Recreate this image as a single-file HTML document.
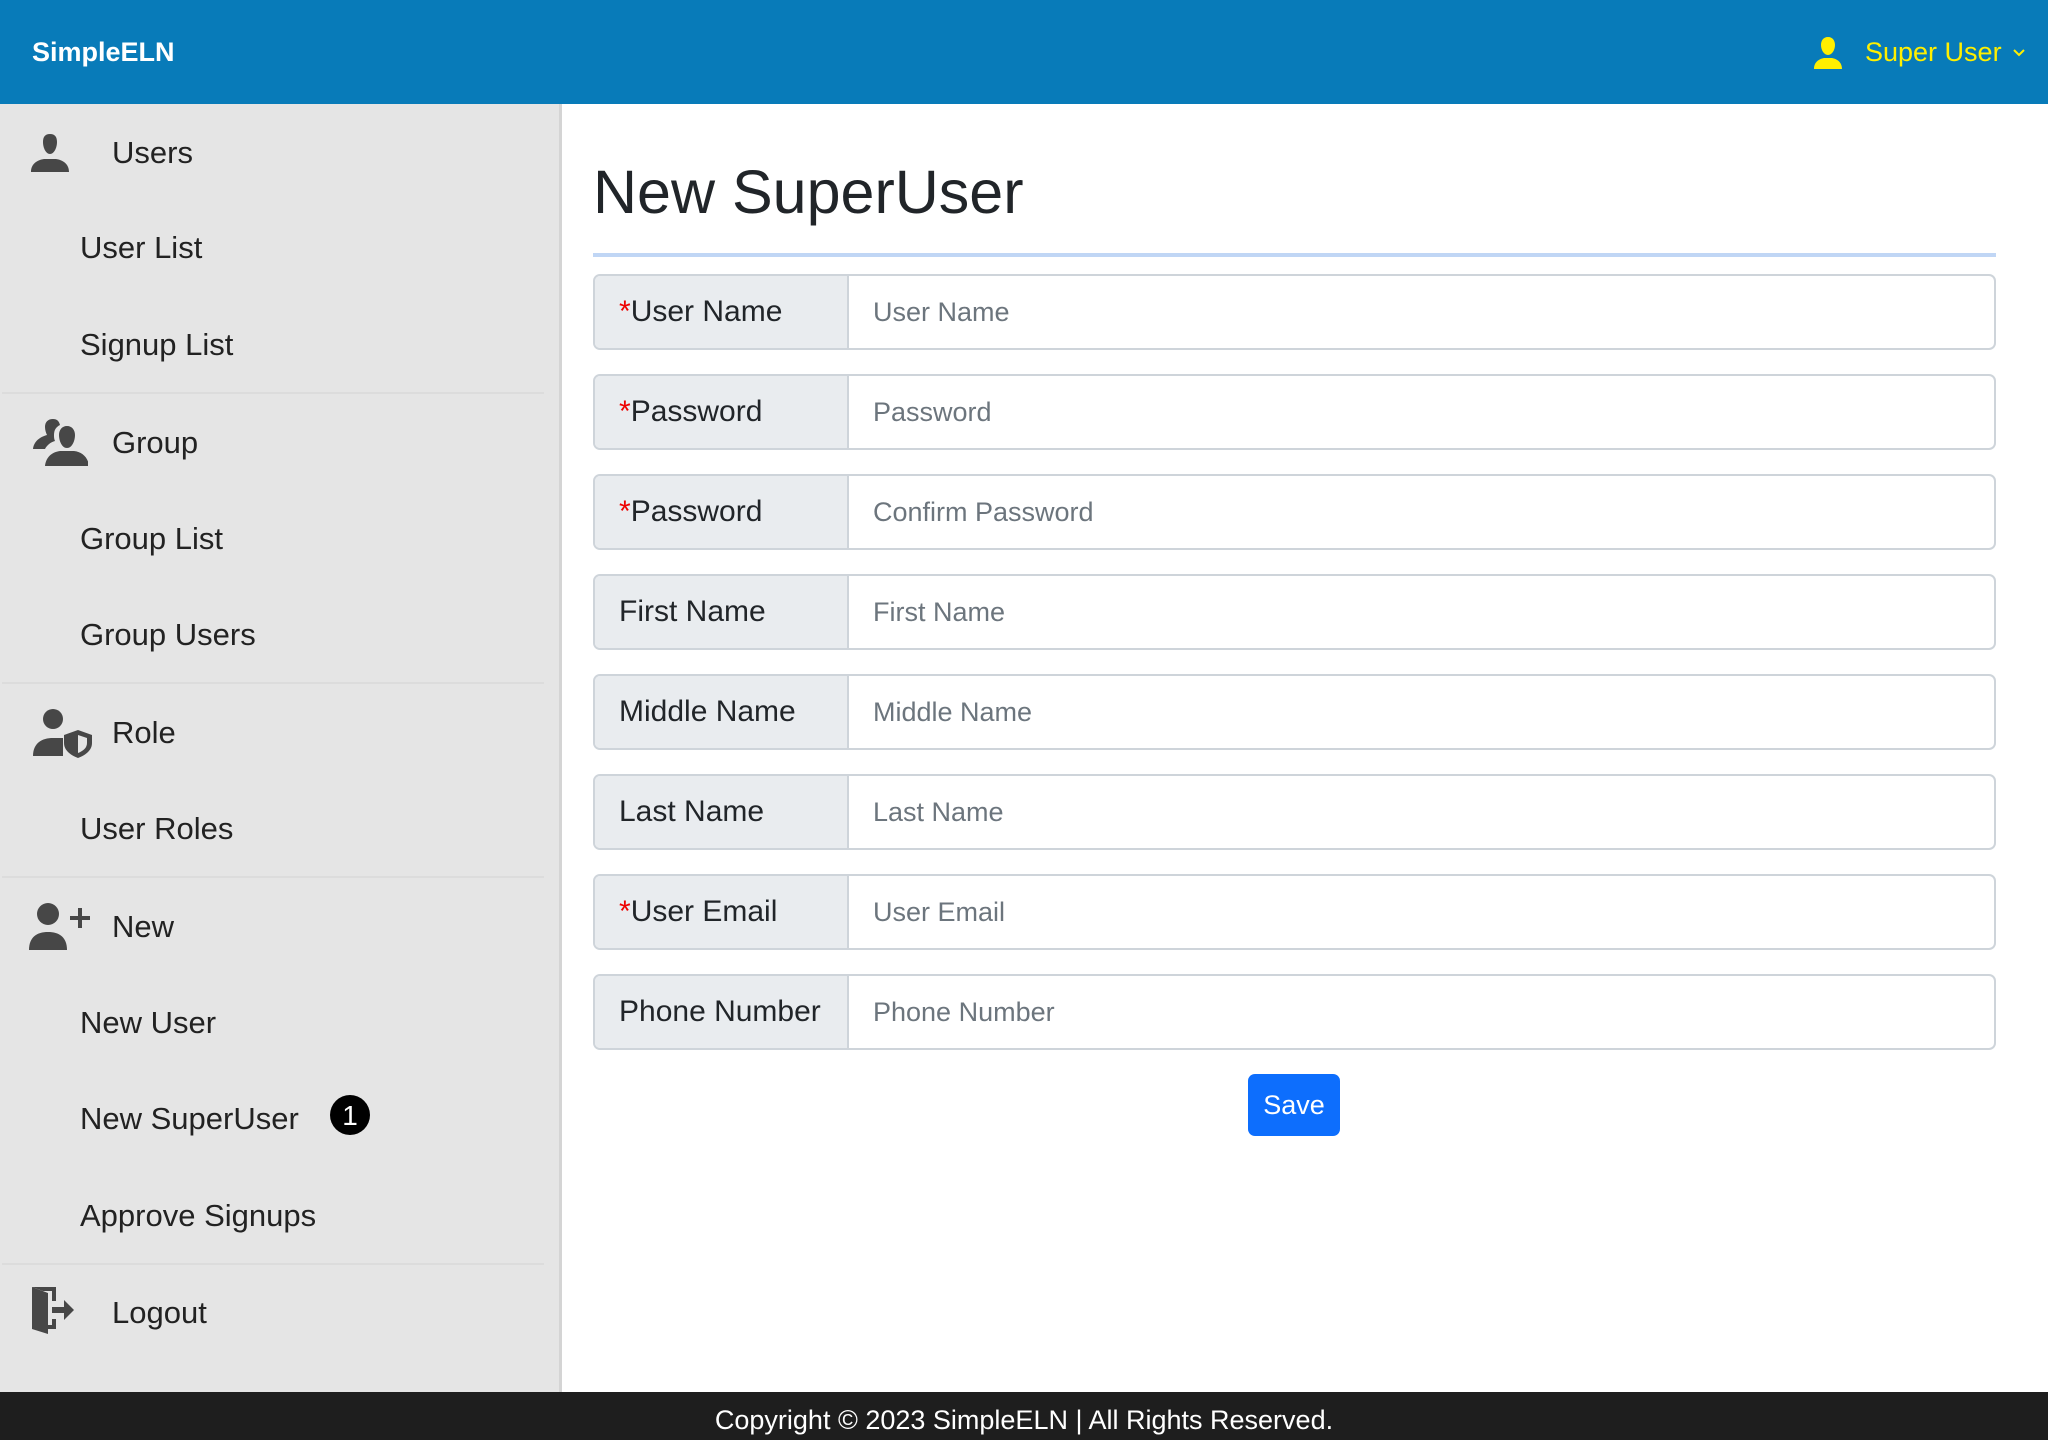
<!DOCTYPE html>
<html><head><meta charset="utf-8"><style>
*{box-sizing:border-box;margin:0;padding:0}
body{width:2048px;height:1440px;position:relative;overflow:hidden;background:#fff;font-family:"Liberation Sans",sans-serif;color:#212529}
.hdr{position:absolute;left:0;top:0;width:2048px;height:104px;background:#087bb9}
.brand{position:absolute;left:32px;top:0;line-height:104px;color:#fff;font-weight:bold;font-size:27px}
.su{position:absolute;left:1865px;top:0;line-height:104px;color:#ffef00;font-size:27px}
.side{position:absolute;left:0;top:104px;width:562px;height:1288px;background:#e5e5e5;border-right:3px solid #d4d4d4}
.it{position:absolute;font-size:31px;line-height:40px;color:#222}
.sep{position:absolute;left:2px;width:542px;height:2px;background:#dcdcdc}
.ic{position:absolute}
h1{position:absolute;left:593px;top:152px;font-size:61px;font-weight:normal;line-height:80px;color:#212529}
.line{position:absolute;left:593px;top:253px;width:1403px;height:4px;background:#c0d6f5}
.row{position:absolute;left:593px;width:1403px;height:76px;border:2px solid #ced4da;border-radius:7px;overflow:hidden;background:#fff}
.lab{position:absolute;left:0;top:0;width:254px;height:100%;background:#e9ecef;border-right:2px solid #ced4da;padding-left:24px;line-height:72px;font-size:30px;color:#212529;white-space:nowrap}
.lab b{color:#e00;font-weight:normal}
.ph{position:absolute;left:278px;top:0;line-height:72px;font-size:27px;color:#6c757d}
.btn{position:absolute;left:1248px;top:1074px;width:92px;height:62px;background:#0d6efd;border-radius:7px;color:#fff;font-size:27px;line-height:62px;text-align:center}
.ft{position:absolute;left:0;top:1392px;width:2048px;height:48px;background:#1e1e1e;color:#fff;text-align:center;font-size:27px;line-height:56px}
</style></head><body>
<div class="hdr"><div class="brand">SimpleELN</div>
<svg class="ic" style="left:1810px;top:36px" width="36" height="34" viewBox="0 0 36 34"><path d="M18 1c-5 0-7 4-7 8 0 5 3 10 7 10s7-5 7-10c0-4-2-8-7-8zM4 33c0-7 5-10 10-11h8c5 1 10 4 10 11z" fill="#ffef00"/></svg>
<div class="su">Super User</div>
<svg class="ic" style="left:2012px;top:48px" width="14" height="10" viewBox="0 0 14 10"><path d="M2 2l5 5 5-5" stroke="#ffef00" stroke-width="2" fill="none"/></svg>
</div>
<div class="side">
<svg class="ic" style="left:30px;top:29px" width="40" height="40" viewBox="0 0 40 40"><path d="M20 1c-5 0-7 3-7 8 0 6 3 12 7 12s7-6 7-12c0-5-2-8-7-8zM1 39c0-8 6-12 13-13h12c7 1 13 5 13 13z" fill="#474747"/></svg>
<div class="it" style="left:112px;top:29px">Users</div>
<div class="it" style="left:80px;top:124px">User List</div>
<div class="it" style="left:80px;top:221px">Signup List</div>
<div class="sep" style="top:288px"></div>
<svg class="ic" style="left:32px;top:314px" width="56" height="50" viewBox="0 0 56 50"><path d="M21 1c-5 0-8 3-8 8 0 3 1 6 2 8-7 2-13 6-14 14h12c2-4 6-7 10-8-1-2-1-4-1-6 0-5 2-8 6-10-1-4-3-6-7-6z" fill="#474747"/><path d="M35 8c-5 0-8 4-8 9 0 6 3 13 8 13s8-7 8-13c0-5-3-9-8-9zM13 48c1-9 7-14 15-15h14c8 1 14 6 15 15z" fill="#474747"/></svg>
<div class="it" style="left:112px;top:319px">Group</div>
<div class="it" style="left:80px;top:415px">Group List</div>
<div class="it" style="left:80px;top:511px">Group Users</div>
<div class="sep" style="top:578px"></div>
<svg class="ic" style="left:32px;top:604px" width="62" height="50" viewBox="0 0 62 50"><circle cx="21" cy="11" r="10" fill="#474747"/><path d="M1 48c0-13 9-18 20-18h10v18z" fill="#474747"/><path d="M46 22l14 5v8c0 7-6 12-14 15-8-3-14-8-14-15v-8z" fill="#474747"/><path d="M46 27l9 3v5c0 5-4 8-9 10z" fill="#e5e5e5"/></svg>
<div class="it" style="left:112px;top:609px">Role</div>
<div class="it" style="left:80px;top:705px">User Roles</div>
<div class="sep" style="top:772px"></div>
<svg class="ic" style="left:28px;top:798px" width="66" height="48" viewBox="0 0 66 48"><circle cx="20" cy="12" r="11" fill="#474747"/><path d="M1 48c0-13 8-18 19-18s19 5 19 18z" fill="#474747"/><path d="M52 6v20M42 16h20" stroke="#474747" stroke-width="4"/></svg>
<div class="it" style="left:112px;top:803px">New</div>
<div class="it" style="left:80px;top:899px">New User</div>
<div class="it" style="left:80px;top:995px">New SuperUser</div>
<svg class="ic" style="left:329px;top:990px" width="42" height="42" viewBox="0 0 42 42"><circle cx="21" cy="21" r="20" fill="#000"/><text x="21" y="31" text-anchor="middle" fill="#fff" font-size="28" font-family="Liberation Sans">1</text></svg>
<div class="it" style="left:80px;top:1092px">Approve Signups</div>
<div class="sep" style="top:1159px"></div>
<svg class="ic" style="left:30px;top:1181px" width="48" height="50" viewBox="0 0 48 50"><path d="M2 2h24v14h-4V6H13l-11-4zM22 34h4v10H18v-4h4z" fill="#474747"/><path d="M2 2l16 6v41L2 44z" fill="#474747"/><path d="M22 22h12v-7l10 10-10 10v-7H22z" fill="#474747"/></svg>
<div class="it" style="left:112px;top:1189px">Logout</div>
</div>
<h1>New SuperUser</h1>
<div class="line"></div>
<div class="row" style="top:274px"><div class="lab"><b>*</b>User Name</div><div class="ph">User Name</div></div>
<div class="row" style="top:374px"><div class="lab"><b>*</b>Password</div><div class="ph">Password</div></div>
<div class="row" style="top:474px"><div class="lab"><b>*</b>Password</div><div class="ph">Confirm Password</div></div>
<div class="row" style="top:574px"><div class="lab">First Name</div><div class="ph">First Name</div></div>
<div class="row" style="top:674px"><div class="lab">Middle Name</div><div class="ph">Middle Name</div></div>
<div class="row" style="top:774px"><div class="lab">Last Name</div><div class="ph">Last Name</div></div>
<div class="row" style="top:874px"><div class="lab"><b>*</b>User Email</div><div class="ph">User Email</div></div>
<div class="row" style="top:974px"><div class="lab">Phone Number</div><div class="ph">Phone Number</div></div>
<div class="btn">Save</div>
<div class="ft">Copyright © 2023 SimpleELN | All Rights Reserved.</div>
</body></html>
